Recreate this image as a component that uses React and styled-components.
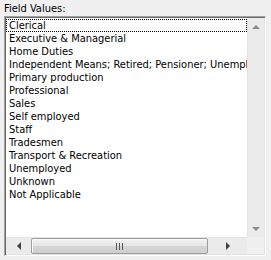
import React from "react";
import styled, { createGlobalStyle } from "styled-components";

const Global = createGlobalStyle`
	html, body {
		margin: 0;
		padding: 0;
		background: #f0f0f0;
	}
	body {
		font-family: Tahoma, "DejaVu Sans Condensed", "Liberation Sans", sans-serif;
		font-size: 11px;
		color: #000;
	}
`;

const Page = styled.div`
	width: 271px;
	height: 260px;
	padding: 2px 0 0 4px;
	box-sizing: border-box;
`;

const Label = styled.div`
	height: 13px;
	line-height: 13px;
`;

const ListBox = styled.div`
	margin-top: 1px;
	width: 262px;
	height: 240px;
	box-sizing: border-box;
	border-style: solid;
	border-width: 1px;
	border-color: #a0a0a0 #fff #fff #a0a0a0;
	box-shadow: inset 1px 1px 0 #696969, inset -1px -1px 0 #e3e3e3;
	background: #fff;
	padding: 1px;
	display: grid;
	grid-template-columns: 1fr 17px;
	grid-template-rows: 1fr 17px;
`;

const Items = styled.div`
	overflow: hidden;
	padding-top: 1px;
`;

const Item = styled.div`
	height: 13px;
	line-height: 13px;
	padding-left: 3px;
	white-space: nowrap;
	box-sizing: border-box;
	outline: ${(p) => (p.focused ? "1px dotted #000" : "none")};
	outline-offset: -1px;
`;

const VBar = styled.div`
	background: #ebebeb;
	border-left: 1px solid #e4e4e4;
	display: flex;
	flex-direction: column;
	justify-content: space-between;
`;

const HBar = styled.div`
	background: #ebebeb;
	border-top: 1px solid #e4e4e4;
	display: flex;
	align-items: stretch;
`;

const ArrowBtn = styled.div`
	width: ${(p) => (p.horizontal ? "25px" : "16px")};
	height: ${(p) => (p.horizontal ? "16px" : "17px")};
	display: flex;
	align-items: center;
	justify-content: center;
`;

const Thumb = styled.div`
	flex: 1;
	margin: 0 0 0 0;
	border: 1px solid #9d9d9d;
	border-radius: 2px;
	background: linear-gradient(#f3f3f3, #e4e4e4 50%, #d5d5d5 51%, #cfcfcf);
	box-shadow: inset 1px 1px 0 #fbfbfb;
	display: flex;
	align-items: center;
	justify-content: center;
`;

const Track = styled.div`
	width: 39px;
	display: flex;
	align-items: center;
	justify-content: center;
`;

const Corner = styled.div`
	background: #f0f0f0;
`;

const Arrow = ({ dir }) => {
	const pts = {
		up: "0,4 4,0 8,4",
		down: "0,0 4,4 8,0",
		left: "4,0 0,4 4,8",
		right: "0,0 4,4 0,8",
	}[dir];
	const vert = dir === "up" || dir === "down";
	return (
		<svg width={vert ? 8 : 4} height={vert ? 4 : 8} viewBox={vert ? "0 0 8 4" : "0 0 4 8"}>
			<polygon points={pts} fill={vert ? "#8a8a8a" : "#404040"} />
		</svg>
	);
};

const Grip = () => (
	<svg width="7" height="7" viewBox="0 0 7 7">
		<rect x="0" y="0" width="1" height="7" fill="#555" />
		<rect x="3" y="0" width="1" height="7" fill="#555" />
		<rect x="6" y="0" width="1" height="7" fill="#555" />
	</svg>
);

const values = [
	"Clerical",
	"Executive & Managerial",
	"Home Duties",
	"Independent Means; Retired; Pensioner; Unemployed",
	"Primary production",
	"Professional",
	"Sales",
	"Self employed",
	"Staff",
	"Tradesmen",
	"Transport & Recreation",
	"Unemployed",
	"Unknown",
	"Not Applicable",
];

export default function App() {
	return (
		<Page>
			<Global />
			<Label>Field Values:</Label>
			<ListBox>
				<Items>
					{values.map((v, i) => (
						<Item key={v} focused={i === 0}>
							{v}
						</Item>
					))}
				</Items>
				<VBar>
					<ArrowBtn>
						<Arrow dir="up" />
					</ArrowBtn>
					<ArrowBtn>
						<Arrow dir="down" />
					</ArrowBtn>
				</VBar>
				<HBar>
					<ArrowBtn horizontal>
						<Arrow dir="left" />
					</ArrowBtn>
					<Thumb>
						<Grip />
					</Thumb>
					<Track>
						<Arrow dir="right" />
					</Track>
				</HBar>
				<Corner />
			</ListBox>
		</Page>
	);
}
